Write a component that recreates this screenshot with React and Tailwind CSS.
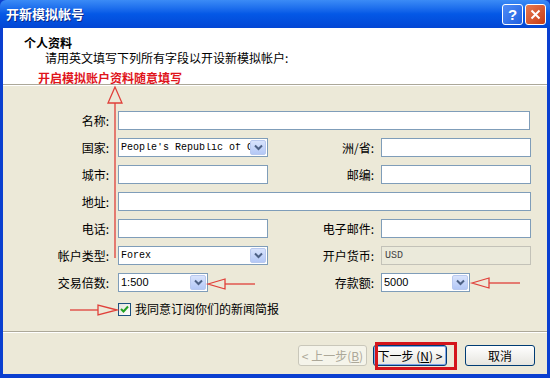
import React from 'react';

const cjk = { fontFamily: '"Noto Sans CJK SC", "Liberation Sans", sans-serif' };
const mono = { fontFamily: '"Liberation Mono", "Noto Sans CJK SC", monospace' };

const Chevron = () => (
  <svg width="9" height="7" viewBox="0 0 9 7">
    <path d="M1 1.5 L4.5 5 L8 1.5" fill="none" stroke="#4d6185" strokeWidth="2" />
  </svg>
);

const Select = ({ value, width, monoText }) => (
  <div
    className="h-[19px] flex items-center border border-[#7f9db9] bg-white pl-[2px] pr-[1px]"
    style={{ width }}
  >
    <span
      className="flex-1 overflow-hidden whitespace-nowrap text-[11px] text-black leading-none"
      style={monoText ? { ...mono, fontSize: 10 } : { fontFamily: '"Liberation Sans", sans-serif', fontSize: 11 }}
    >
      {value}
    </span>
    <div className="w-[16px] h-[15px] rounded-[2px] border border-[#b9c9ef] bg-gradient-to-b from-[#d8e3fc] to-[#b4c8f6] flex items-center justify-center">
      <Chevron />
    </div>
  </div>
);

const Input = ({ width, value, disabled }) => (
  <div
    className={`h-[19px] flex items-center px-[3px] border ${disabled ? 'border-[#c3c2b8] bg-[#ebeadb]' : 'border-[#7f9db9] bg-white'}`}
    style={{ width }}
  >
    {value && (
      <span className="text-[10px] text-[#444] leading-none" style={mono}>{value}</span>
    )}
  </div>
);

const Label = ({ children, width = 107 }) => (
  <div className="text-right text-[12px] text-black leading-none pr-[1px]" style={{ ...cjk, width }}>
    {children}
  </div>
);

const Row = ({ children }) => <div className="flex items-center h-[19px]">{children}</div>;

const XpButton = ({ children, width, disabled, primary }) => (
  <div
    className={`h-[21px] flex items-center justify-center rounded-[3px] border text-[12px] leading-none whitespace-nowrap ${
      disabled
        ? 'border-[#c9c7ba] bg-[#f5f4ea] text-[#aca899]'
        : primary
        ? 'border-[#003c74] bg-gradient-to-b from-[#ffffff] to-[#e6e5df] text-black shadow-[inset_0_0_0_1px_#7ea4e8]'
        : 'border-[#003c74] bg-gradient-to-b from-[#ffffff] to-[#e6e5df] text-black'
    }`}
    style={{ ...cjk, width }}
  >
    {children}
  </div>
);

export default function App() {
  return (
    <div className="relative w-[550px] h-[378px] bg-[#0a3fd0] overflow-hidden" style={cjk}>
      {/* title bar */}
      <div className="h-[28px] flex items-center rounded-t-[6px] bg-gradient-to-b from-[#3b8bf6] via-[#0458e6] to-[#0346d4] px-[6px]">
        <span className="flex-1 text-white font-bold text-[13px] [text-shadow:1px_1px_0_#0b2a8a]">开新模拟帐号</span>
        <div className="flex gap-[2px] mr-[-2px]">
          <div className="w-[21px] h-[21px] rounded-[3px] border border-white bg-gradient-to-br from-[#4f8cf6] to-[#1f5fe0] flex items-center justify-center text-white font-bold text-[15px] leading-none" style={{ fontFamily: '"Liberation Sans", sans-serif' }}>
            ?
          </div>
          <div className="w-[21px] h-[21px] rounded-[3px] border border-white bg-gradient-to-br from-[#e8794f] to-[#c63b12] flex items-center justify-center">
            <svg width="11" height="11" viewBox="0 0 11 11">
              <path d="M1.5 1.5 L9.5 9.5 M9.5 1.5 L1.5 9.5" stroke="#fff" strokeWidth="2" />
            </svg>
          </div>
        </div>
      </div>

      <div className="mx-[3px] h-[346px] bg-[#ece9d8] flex flex-col">
        {/* header */}
        <div className="h-[57px] bg-white border-b border-[#aca899] relative">
          <div className="pl-[21px] pt-[8px] text-[12px] font-bold text-black leading-[14px]">个人资料</div>
          <div className="pl-[42px] pt-[1px] text-[12px] text-black leading-[14px]">请用英文填写下列所有字段以开设新模拟帐户:</div>
          <div className="pl-[35px] pt-[6px] text-[12px] font-bold text-[#e0141b] leading-[14px]">开启模拟账户资料随意填写</div>
        </div>
        <div className="h-px bg-white" />

        {/* form */}
        <div className="flex flex-col gap-[8px] pt-[25px]">
          <Row>
            <Label>名称:</Label>
            <div className="ml-[8px]"><Input width={412} /></div>
          </Row>
          <Row>
            <Label>国家:</Label>
            <div className="ml-[8px]"><Select width={150} value="People's Republic of China" monoText /></div>
            <Label>洲/省:</Label>
            <div className="ml-[6px]"><Input width={150} /></div>
          </Row>
          <Row>
            <Label>城市:</Label>
            <div className="ml-[8px]"><Input width={150} /></div>
            <Label>邮编:</Label>
            <div className="ml-[6px]"><Input width={150} /></div>
          </Row>
          <Row>
            <Label>地址:</Label>
            <div className="ml-[8px]"><Input width={413} /></div>
          </Row>
          <Row>
            <Label>电话:</Label>
            <div className="ml-[8px]"><Input width={150} /></div>
            <Label>电子邮件:</Label>
            <div className="ml-[6px]"><Input width={150} /></div>
          </Row>
          <Row>
            <Label>帐户类型:</Label>
            <div className="ml-[8px]"><Select width={150} value="Forex" monoText /></div>
            <Label>开户货币:</Label>
            <div className="ml-[6px]"><Input width={150} value="USD" disabled /></div>
          </Row>
          <Row>
            <Label>交易倍数:</Label>
            <div className="ml-[8px]"><Select width={90} value="1:500" /></div>
            <Label width={167}>存款额:</Label>
            <div className="ml-[6px]"><Select width={89} value="5000" /></div>
          </Row>
          <div className="flex items-center h-[14px] mt-[2px] pl-[115px]">
            <div className="w-[13px] h-[13px] border border-[#1c5180] bg-gradient-to-br from-[#e4e3dd] to-[#ffffff] flex items-center justify-center">
              <svg width="9" height="8" viewBox="0 0 9 8">
                <path d="M1 4 L3.5 6.5 L8 1.5" fill="none" stroke="#21a121" strokeWidth="2" />
              </svg>
            </div>
            <span className="ml-[4px] text-[12px] text-black leading-none">我同意订阅你们的新闻简报</span>
          </div>
        </div>

        {/* footer */}
        <div className="mt-auto">
          <div className="h-px bg-[#aca899]" />
          <div className="h-px bg-white" />
          <div className="h-[41px] flex items-start justify-end gap-[6px] pt-[12px] pr-[12px]">
            <XpButton width={69} disabled>&lt; 上一步(<span className="underline">B</span>)</XpButton>
            <XpButton width={74} primary>下一步 (<span className="underline">N</span>) &gt;</XpButton>
            <div className="w-[6px]" />
            <XpButton width={70}>取消</XpButton>
          </div>
        </div>
      </div>

      {/* annotations */}
      <div className="absolute left-[375px] top-[342px] w-[82px] h-[28px] border-[3px] border-[#d4151c]" />
      <svg className="absolute left-0 top-0 pointer-events-none" width="550" height="378">
        <g fill="none" stroke="#e0403a" strokeWidth="1.3">
          <path d="M115 103 L115 258" />
          <path d="M115 87 L108 103 L122 103 Z" />
          <path d="M208 284 L225 279 L225 289 Z" />
          <path d="M225 284 L255 284" />
          <path d="M472 283 L489 278 L489 288 Z" />
          <path d="M489 283 L520 283" />
          <path d="M117 310 L98 305 L98 315 Z" />
          <path d="M70 310 L98 310" />
        </g>
      </svg>
    </div>
  );
}
